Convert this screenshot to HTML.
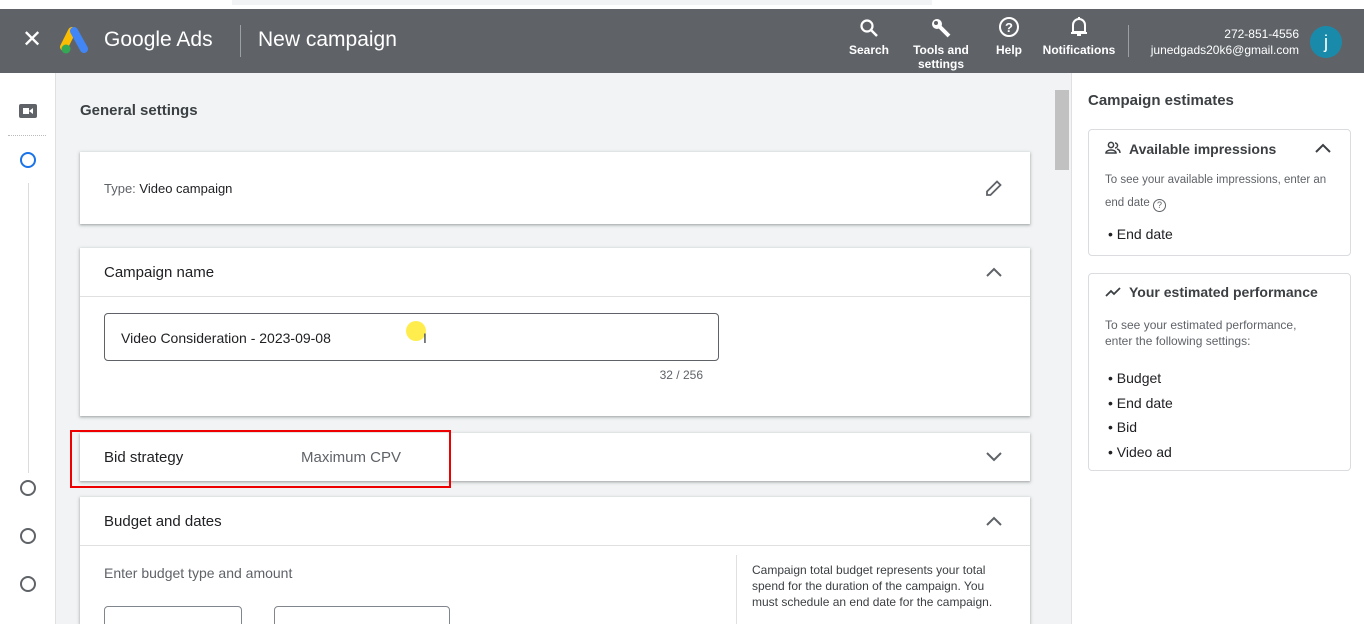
<!DOCTYPE html>
<html><head><style>
*{box-sizing:border-box;margin:0;padding:0}
html,body{width:1364px;height:624px;overflow:hidden}
body{font-family:"Liberation Sans",Arial,sans-serif;background:#fff;position:relative;color:#3c4043}
.abs{position:absolute}
.hdr{left:0;top:9px;width:1364px;height:64px;background:#5f6368;color:#fff}
.card{position:absolute;left:80px;width:950px;background:#fff;box-shadow:0 1px 2px rgba(60,64,67,.3),0 1px 3px 1px rgba(60,64,67,.15)}
.t{font-size:15px;color:#202124}
.hi{font-size:12px;font-weight:bold;text-align:center;color:#fff;line-height:14px}
.rc{position:absolute;left:1088px;width:263px;border:1px solid #dadce0;border-radius:4px;background:#fff}
.circ{position:absolute;left:20px;width:16px;height:16px;border:2px solid #5f6368;border-radius:50%}
</style></head><body>
<div class="abs" style="left:0;top:0;width:1364px;height:9px;background:#fff"></div>
<div class="abs" style="left:232px;top:0;width:700px;height:5px;background:#f1f3f4"></div>
<div class="abs hdr">
 <div class="abs" style="left:22px;top:18px;font-size:24px;line-height:26px">✕</div>
 <svg class="abs" style="left:60px;top:18px" width="32" height="28" viewBox="0 0 32 28"><path d="M12 4 L4 20" stroke="#fbbc04" stroke-width="8" stroke-linecap="round"/><path d="M14 4 L24 22" stroke="#4285f4" stroke-width="8" stroke-linecap="round"/><circle cx="6" cy="22" r="4.5" fill="#34a853"/></svg>
 <div class="abs" style="left:104px;top:19px;font-size:21px">Google Ads</div>
 <div class="abs" style="left:240px;top:16px;width:1px;height:32px;background:#9aa0a6"></div>
 <div class="abs" style="left:258px;top:19px;font-size:21px">New campaign</div>
 <svg class="abs" style="left:859px;top:9px" width="20" height="20" viewBox="0 0 20 20"><circle cx="8" cy="8" r="5.5" stroke="#fff" stroke-width="2.2" fill="none"/><path d="M12 12 L18 18" stroke="#fff" stroke-width="2.5"/></svg>
 <div class="abs hi" style="left:845px;top:34px;width:48px">Search</div>
 <svg class="abs" style="left:930px;top:8px" width="22" height="22" viewBox="0 0 22 22"><circle cx="7" cy="7" r="5" fill="#fff"/><path d="M9 9 L19 19" stroke="#fff" stroke-width="4"/><circle cx="6" cy="6" r="2" fill="#5f6368"/></svg>
 <div class="abs hi" style="left:905px;top:34px;width:72px">Tools and<br>settings</div>
 <svg class="abs" style="left:998px;top:7px" width="22" height="22" viewBox="0 0 22 22"><circle cx="11" cy="11" r="9" stroke="#fff" stroke-width="2" fill="none"/><text x="11" y="16" font-size="13" font-weight="bold" fill="#fff" text-anchor="middle" font-family="Liberation Sans">?</text></svg>
 <div class="abs hi" style="left:990px;top:34px;width:38px">Help</div>
 <svg class="abs" style="left:1069px;top:7px" width="20" height="22" viewBox="0 0 20 22"><path d="M4 16 V9 a6 6 0 0 1 12 0 V16 Z" stroke="#fff" stroke-width="2" fill="none"/><path d="M2 17 H18" stroke="#fff" stroke-width="2"/><path d="M8 19 H12" stroke="#fff" stroke-width="2"/><path d="M10 1 V3" stroke="#fff" stroke-width="2"/></svg>
 <div class="abs hi" style="left:1038px;top:34px;width:82px">Notifications</div>
 <div class="abs" style="left:1128px;top:16px;width:1px;height:32px;background:#9aa0a6"></div>
 <div class="abs" style="left:1130px;top:17px;width:169px;text-align:right;font-size:12px;line-height:16px">272-851-4556<br>junedgads20k6@gmail.com</div>
 <div class="abs" style="left:1310px;top:17px;width:32px;height:32px;border-radius:50%;background:#1a8aab;color:#fff;font-size:18px;text-align:center;line-height:32px">j</div>
</div>
<div class="abs" style="left:56px;top:73px;width:997px;height:551px;background:#f1f3f4"></div>
<div class="abs" style="left:55px;top:73px;width:1px;height:551px;background:#e0e0e0"></div>
<div class="abs" style="left:1053px;top:73px;width:18px;height:551px;background:#f1f3f4"></div>
<div class="abs" style="left:1055px;top:90px;width:14px;height:80px;background:#c1c1c1"></div>
<div class="abs" style="left:1071px;top:73px;width:1px;height:551px;background:#e0e0e0"></div>
<svg class="abs" style="left:19px;top:104px" width="18" height="14" viewBox="0 0 18 14"><rect x="0" y="0" width="18" height="14" rx="2" fill="#5f6368"/><rect x="4" y="4" width="6" height="6" fill="#fff"/><path d="M10 7 L14 4 V10 Z" fill="#fff"/></svg>
<div class="abs" style="left:8px;top:135px;width:38px;border-top:1px dotted #bbb"></div>
<div class="circ" style="top:152px;border-color:#1a73e8"></div>
<div class="abs" style="left:28px;top:183px;width:1px;height:290px;background:#dadce0"></div>
<div class="circ" style="top:480px"></div>
<div class="circ" style="top:528px"></div>
<div class="circ" style="top:576px"></div>
<div class="abs t" style="left:80px;top:102px;font-weight:bold;color:#3c4043">General settings</div>
<div class="card" style="top:152px;height:72px">
 <div class="abs" style="left:24px;top:29px;font-size:13px;color:#5f6368">Type: <span style="color:#202124">Video campaign</span></div>
 <svg class="abs" style="left:904px;top:26px" width="20" height="20" viewBox="0 0 20 20"><path d="M3 17 L3 13.5 L13 3.5 L16.5 7 L6.5 17 Z" stroke="#5f6368" stroke-width="1.8" fill="none"/></svg>
</div>
<div class="card" style="top:248px;height:168px">
 <div class="abs t" style="left:24px;top:16px">Campaign name</div>
 <svg class="abs" style="left:904px;top:16px" width="20" height="16" viewBox="0 0 20 16"><path d="M3 12 L10 5 L17 12" stroke="#5f6368" stroke-width="2" fill="none"/></svg>
 <div class="abs" style="left:0;top:48px;width:950px;height:1px;background:#e0e0e0"></div>
 <div class="abs" style="left:24px;top:65px;width:615px;height:48px;border:1px solid #5f6368;border-radius:4px"></div>
 <div class="abs" style="left:41px;top:82px;font-size:14px;color:#202124">Video Consideration - 2023-09-08</div>
 <div class="abs" style="left:326px;top:73px;width:20px;height:20px;border-radius:50%;background:#ffeb3b;opacity:.9"></div>
 <div class="abs" style="left:343px;top:82px;font-size:14px">I</div>
 <div class="abs" style="left:560px;top:120px;width:63px;text-align:right;font-size:12px;color:#5f6368">32 / 256</div>
</div>
<div class="card" style="top:433px;height:48px">
 <div class="abs t" style="left:24px;top:16px">Bid strategy</div>
 <div class="abs" style="left:221px;top:16px;font-size:15px;color:#5f6368">Maximum CPV</div>
 <svg class="abs" style="left:904px;top:16px" width="20" height="16" viewBox="0 0 20 16"><path d="M3 4 L10 11 L17 4" stroke="#5f6368" stroke-width="2" fill="none"/></svg>
</div>
<div class="abs" style="left:70px;top:430px;width:381px;height:58px;border:2px solid #e00"></div>
<div class="card" style="top:497px;height:127px">
 <div class="abs t" style="left:24px;top:16px">Budget and dates</div>
 <svg class="abs" style="left:904px;top:16px" width="20" height="16" viewBox="0 0 20 16"><path d="M3 12 L10 5 L17 12" stroke="#5f6368" stroke-width="2" fill="none"/></svg>
 <div class="abs" style="left:0;top:48px;width:950px;height:1px;background:#e0e0e0"></div>
 <div class="abs" style="left:24px;top:68px;font-size:14px;color:#5f6368">Enter budget type and amount</div>
 <div class="abs" style="left:24px;top:109px;width:138px;height:40px;border:1px solid #80868b;border-radius:4px"></div>
 <div class="abs" style="left:194px;top:109px;width:176px;height:40px;border:1px solid #80868b;border-radius:4px"></div>
 <div class="abs" style="left:656px;top:58px;width:1px;height:90px;background:#e0e0e0"></div>
 <div class="abs" style="left:672px;top:65px;width:250px;font-size:12px;line-height:16px;color:#3c4043">Campaign total budget represents your total spend for the duration of the campaign. You must schedule an end date for the campaign.</div>
</div>
<div class="abs t" style="left:1088px;top:92px;font-weight:bold;color:#3c4043">Campaign estimates</div>
<div class="rc" style="top:129px;height:127px">
 <svg class="abs" style="left:16px;top:11px" width="16" height="14" viewBox="0 0 16 14"><circle cx="6" cy="4" r="2.6" stroke="#3c4043" stroke-width="1.5" fill="none"/><path d="M1 12 c0-4 10-4 10 0 Z" stroke="#3c4043" stroke-width="1.5" fill="none"/><path d="M10 2 a2.5 2.5 0 0 1 0 5 M12 8 c2 .5 3 2 3 4" stroke="#3c4043" stroke-width="1.5" fill="none"/></svg>
 <div class="abs" style="left:40px;top:11px;font-size:14px;font-weight:bold;color:#3c4043">Available impressions</div>
 <svg class="abs" style="left:224px;top:10px" width="20" height="16" viewBox="0 0 20 16"><path d="M3 12 L10 5 L17 12" stroke="#3c4043" stroke-width="2" fill="none"/></svg>
 <div class="abs" style="left:16px;top:39px;width:240px;font-size:11.5px;line-height:23px;color:#5f6368">To see your available impressions, enter an end date <span style="display:inline-block;width:13px;height:13px;border:1.3px solid #5f6368;border-radius:50%;font-size:9px;line-height:11px;text-align:center;vertical-align:-2px">?</span></div>
 <div class="abs" style="left:19px;top:96px;font-size:14px;color:#202124">• End date</div>
</div>
<div class="rc" style="top:273px;height:198px">
 <svg class="abs" style="left:16px;top:11px" width="16" height="14" viewBox="0 0 16 14"><path d="M1 11 L6 6 L9 9 L15 3" stroke="#3c4043" stroke-width="1.8" fill="none"/></svg>
 <div class="abs" style="left:40px;top:10px;font-size:14px;font-weight:bold;color:#3c4043">Your estimated performance</div>
 <div class="abs" style="left:16px;top:43px;width:215px;font-size:12px;line-height:16px;color:#5f6368">To see your estimated performance, enter the following settings:</div>
 <div class="abs" style="left:19px;top:92px;font-size:14px;line-height:24.5px;color:#202124">• Budget<br>• End date<br>• Bid<br>• Video ad</div>
</div>
</body></html>
